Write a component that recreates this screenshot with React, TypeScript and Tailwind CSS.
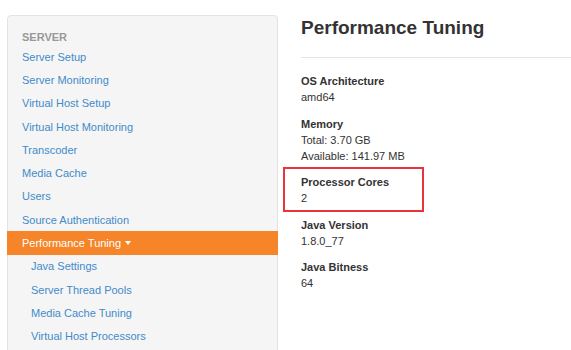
import React from "react";

const links = [
  "Server Setup",
  "Server Monitoring",
  "Virtual Host Setup",
  "Virtual Host Monitoring",
  "Transcoder",
  "Media Cache",
  "Users",
  "Source Authentication",
];
const subs = [
  "Java Settings",
  "Server Thread Pools",
  "Media Cache Tuning",
  "Virtual Host Processors",
];

function Group({ label, values }: { label: string; values: string[] }) {
  return (
    <div className="text-[11px] leading-[16px] text-[#333]">
      <div className="font-bold">{label}</div>
      {values.map((v) => (
        <div key={v}>{v}</div>
      ))}
    </div>
  );
}

export default function App() {
  return (
    <div
      className="w-[571px] h-[350px] overflow-hidden bg-white flex pl-[7px] pt-[15px] gap-[23px]"
      style={{ fontFamily: '"Liberation Sans", Arial, sans-serif' }}
    >
      <div className="w-[271px] shrink-0 h-[400px] bg-[#f5f5f5] border border-[#e3e3e3] rounded-[4px] pt-[13px]">
        <div className="h-[16.4px] flex items-center pl-[14px] text-[11px] font-bold text-[#999]">
          SERVER
        </div>
        {links.map((l) => (
          <div key={l} className="h-[23.25px] flex items-center pl-[14px] text-[11px] text-[#428bca]">
            {l}
          </div>
        ))}
        <div className="h-[23.6px] -mx-px flex items-center pl-[15px] text-[11px] text-white bg-[#f68428]">
          Performance Tuning
          <span className="ml-[4px] inline-block w-0 h-0 border-l-[3.5px] border-r-[3.5px] border-t-[4px] border-l-transparent border-r-transparent border-t-white" />
        </div>
        {subs.map((l) => (
          <div key={l} className="h-[23.25px] flex items-center pl-[23px] text-[11px] text-[#428bca]">
            {l}
          </div>
        ))}
      </div>
      <div className="flex-1 pt-[1px]">
        <h1 className="text-[19px] leading-[24px] font-bold text-[#333]">Performance Tuning</h1>
        <div className="mt-[17px] border-t border-[#e5e5e5]" />
        <div className="mt-[15px] flex flex-col gap-[10.5px]">
          <Group label="OS Architecture" values={["amd64"]} />
          <Group label="Memory" values={["Total: 3.70 GB", "Available: 141.97 MB"]} />
          <div className="relative">
            <Group label="Processor Cores" values={["2"]} />
            <div className="absolute top-[-7px] left-[-18px] w-[141px] h-[45px] border-2 border-[#e8333b]" />
          </div>
          <Group label="Java Version" values={["1.8.0_77"]} />
          <Group label="Java Bitness" values={["64"]} />
        </div>
      </div>
    </div>
  );
}
